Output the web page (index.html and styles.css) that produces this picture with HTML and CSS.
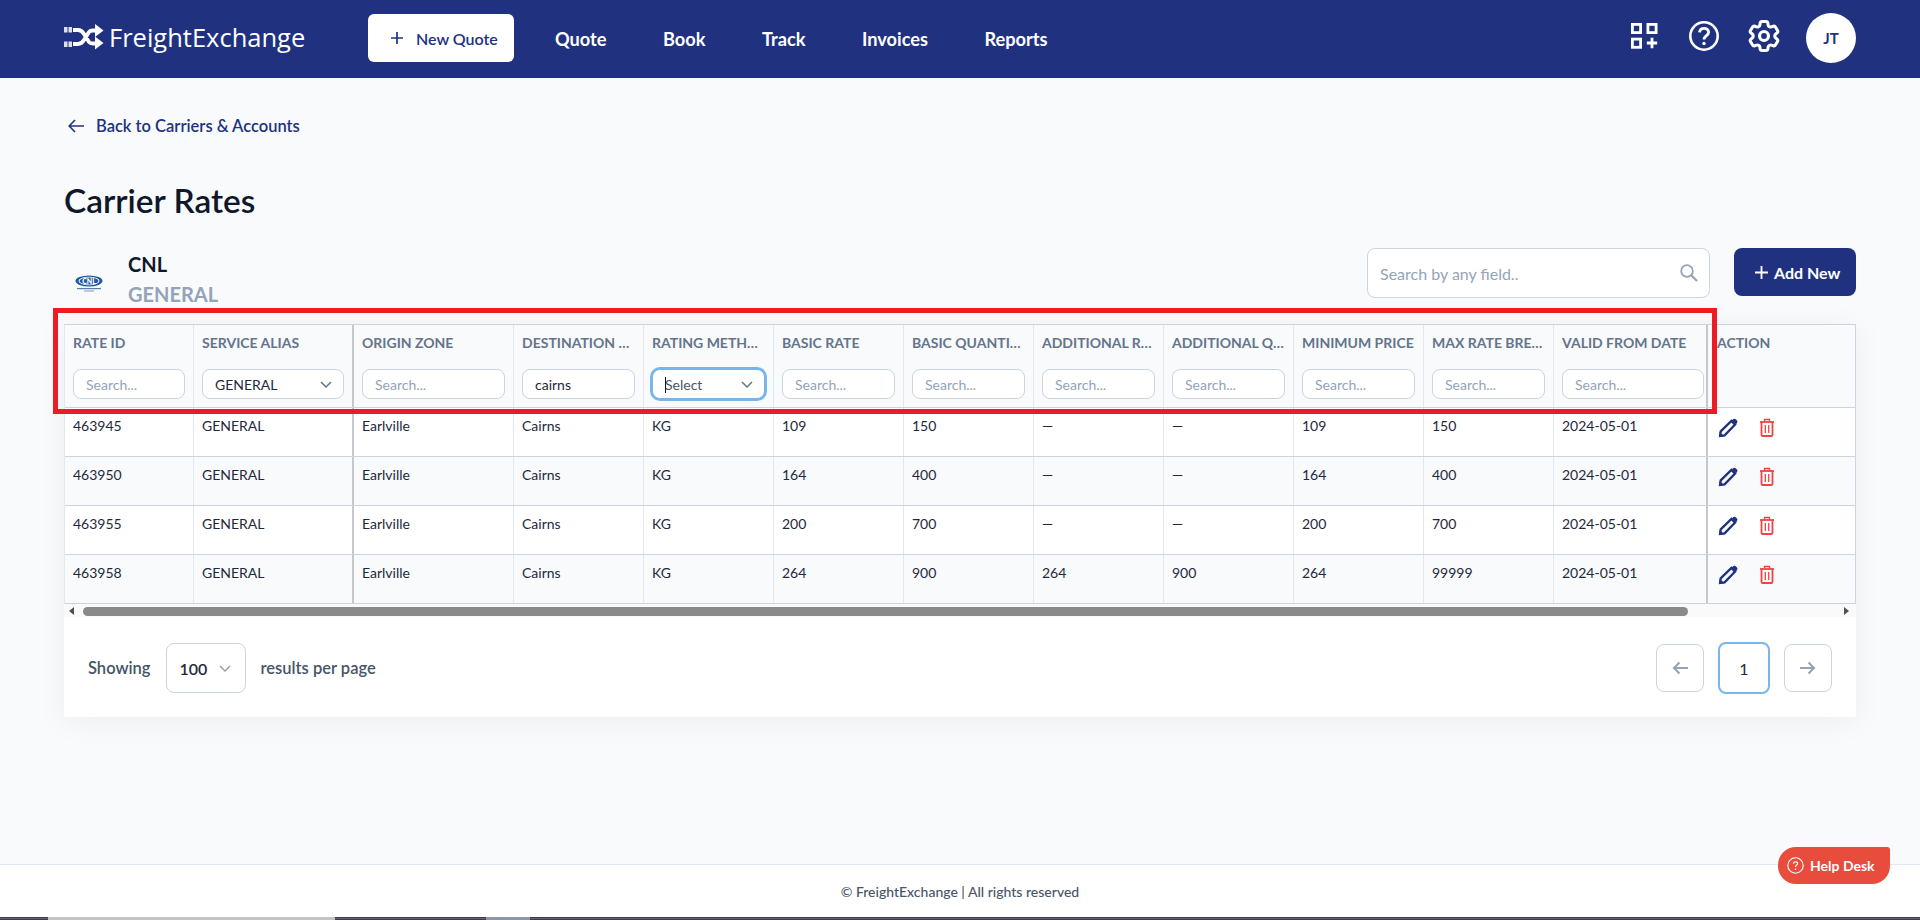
FILE: index.html
```html
<!DOCTYPE html>
<html lang="en">
<head>
<meta charset="utf-8">
<title>Carrier Rates</title>
<link rel="stylesheet" href="styles.css">
</head>
<body>
<svg class="defs" width="0" height="0">
  <defs>
    <g id="pencil"><path d="M2.100 17.900l.6-4.500L13.400 2.900l3.700 3.700L6.600 17.300z" fill="none" stroke="#20327f" stroke-width="2.300"/><path d="M14.800 1.500c1-1 2.200-1 3.100-.1l.9.900c.9.900.9 2.100-.1 3.100l-.9.900-3.900-3.900z" fill="#20327f"/><path d="M1 19l.7-5 4.300 4.300z" fill="#20327f"/></g>
    <g id="trash" fill="none" stroke="#ef4444"><path d="M1 4h14" stroke-width="1.800"/><path d="M5.500 3.500V1.500h5v2" stroke-width="1.400"/><path d="M2.500 4v12.700c0 .8.500 1.300 1.300 1.300h8.400c.8 0 1.300-.5 1.300-1.300V4" stroke-width="1.800"/><path d="M6.300 7v8M9.700 7v8" stroke-width="1.300"/></g>
  </defs>
</svg>
<header class="nav">
  <a class="logo">
    <svg class="logo-mark" width="40" height="26" viewBox="0 0 40 26"><g fill="#fff"><rect x="0" y="3" width="3.500" height="5.500" opacity=".85"/><rect x="4.500" y="3" width="3.500" height="5.500" opacity=".85"/><rect x="0" y="17.500" width="3.500" height="5.500" opacity=".85"/><rect x="4.500" y="17.500" width="3.500" height="5.500" opacity=".85"/><path d="M31 0l8.500 6.500L31 13z"/><path d="M31 12.500l8.500 6.500L31 25.500z"/></g><path d="M9 6h5c3 0 4.500 1.500 6 4l5 8c1 1.500 2 1.500 4 1.500h4M9 20h5c3 0 4.500-1.500 6-4l5-8c1-1.500 2-1.500 4-1.500h4" fill="none" stroke="#fff" stroke-width="3.800"/></svg>
    <span class="logo-text">FreightExchange</span>
  </a>
  <button class="new-quote"><svg width="14" height="14" viewBox="0 0 14 14"><path d="M7 1v12M1 7h12" stroke="#20327f" stroke-width="1.700" fill="none"/></svg><span>New Quote</span></button>
  <nav class="links"><a>Quote</a><a>Book</a><a>Track</a><a>Invoices</a><a>Reports</a></nav>
  <div class="nav-right">
    <svg class="i-apps" width="28" height="28" viewBox="0 0 28 28" fill="none" stroke="#fff" stroke-width="2.800"><rect x="2.400" y="2.400" width="8.200" height="8.200"/><rect x="17.900" y="2.400" width="8.200" height="8.200"/><rect x="2.400" y="17.100" width="8.200" height="8.200"/><path d="M22 15.800v10.500M16.800 21h10.400"/></svg>
    <svg class="i-help" width="32" height="32" viewBox="0 0 32 32" fill="none" stroke="#fff" stroke-width="2.600"><circle cx="16" cy="16" r="13.700"/><path d="M11.500 12.300c.3-2.500 2.200-4 4.600-4 2.600 0 4.500 1.600 4.500 3.900 0 3.500-4.600 3.500-4.600 7.300" stroke-width="2.800"/><circle cx="16" cy="23.500" r="1.700" fill="#fff" stroke="none"/></svg>
    <svg class="i-gear" width="32" height="32" viewBox="2 2 20 20" fill="none" stroke="#fff" stroke-width="1.900"><path d="M9.594 3.940c.09-.542.56-.94 1.110-.94h2.593c.55 0 1.020.398 1.110.94l.213 1.281c.063.374.313.686.645.87.074.04.147.083.22.127.325.196.72.257 1.075.124l1.217-.456a1.125 1.125 0 0 1 1.370.49l1.296 2.247a1.125 1.125 0 0 1-.26 1.431l-1.003.827c-.293.241-.438.613-.43.992a7.723 7.723 0 0 1 0 .255c-.008.378.137.75.43.991l1.004.827c.424.35.534.955.26 1.430l-1.298 2.247a1.125 1.125 0 0 1-1.369.491l-1.217-.456c-.355-.133-.75-.072-1.076.124a6.470 6.470 0 0 1-.22.128c-.331.183-.581.495-.644.869l-.213 1.281c-.09.543-.56.94-1.110.94h-2.594c-.55 0-1.019-.398-1.110-.94l-.213-1.281c-.062-.374-.312-.686-.644-.87a6.520 6.520 0 0 1-.22-.127c-.325-.196-.72-.257-1.076-.124l-1.217.456a1.125 1.125 0 0 1-1.369-.49l-1.297-2.247a1.125 1.125 0 0 1 .26-1.431l1.004-.827c.292-.24.437-.613.43-.991a6.932 6.932 0 0 1 0-.255c.007-.38-.138-.751-.43-.992l-1.004-.827a1.125 1.125 0 0 1-.26-1.430l1.297-2.247a1.125 1.125 0 0 1 1.370-.491l1.216.456c.356.133.751.072 1.076-.124.072-.044.146-.086.22-.128.332-.183.582-.495.644-.869l.214-1.280Z"/><circle cx="12" cy="12" r="2.800" stroke-width="2"/></svg>
    <div class="avatar">JT</div>
  </div>
</header>

<main class="main">
  <a class="back"><svg width="16" height="14" viewBox="0 0 16 14" fill="none" stroke="#20327f" stroke-width="1.600"><path d="M7 1L1.200 7 7 13M1.500 7H16"/></svg><span>Back to Carriers &amp; Accounts</span></a>
  <h1 class="title">Carrier Rates</h1>
  <div class="carrier-row">
    <div class="carrier">
      <div class="carrier-logo">
        <svg width="28" height="18" viewBox="0 0 28 18"><ellipse cx="14" cy="6" rx="13.500" ry="5.500" fill="#1f5a9e"/><ellipse cx="14" cy="6" rx="10.500" ry="4.200" fill="#fff"/><ellipse cx="14" cy="6" rx="9.500" ry="3.500" fill="#1f5a9e"/><text x="14" y="8.700" class="cnl-mark">CNL</text><rect x="2" y="13" width="24" height="1.200" fill="#5a7cab"/><rect x="9" y="15.500" width="10" height="1" fill="#7d96bb"/></svg>
      </div>
      <div class="carrier-names"><div class="carrier-name">CNL</div><div class="carrier-sub">GENERAL</div></div>
    </div>
    <div class="carrier-actions">
      <div class="search-all"><input class="search-all-input" placeholder="Search by any field.."><svg width="18" height="18" viewBox="0 0 18 18" fill="none" stroke="#94a3b8" stroke-width="1.800"><circle cx="7" cy="7" r="5.800"/><path d="M11.200 11.200L17 17" stroke-width="2.200"/></svg></div>
      <button class="add-new"><svg width="13" height="13" viewBox="0 0 13 13"><path d="M6.500 0v13M0 6.500h13" stroke="#fff" stroke-width="1.800" fill="none"/></svg><span>Add New</span></button>
    </div>
  </div>

  <section class="card">
    <div class="grid">
      <div class="row head">
        <div class="hc"><div class="hl">RATE ID</div><input class="fi" placeholder="Search..."></div>
        <div class="hc pin-l"><div class="hl">SERVICE ALIAS</div><div class="fs"><span>GENERAL</span><svg class="chev" width="12" height="7" viewBox="0 0 12 7"><path d="M1 1l5 5 5-5" fill="none" stroke="#64748b" stroke-width="1.500"/></svg></div></div>
        <div class="hc"><div class="hl">ORIGIN ZONE</div><input class="fi" placeholder="Search..."></div>
        <div class="hc"><div class="hl">DESTINATION ZONE</div><input class="fi" value="cairns"></div>
        <div class="hc"><div class="hl">RATING METHOD</div><div class="fs focus"><i class="caret"></i><span class="sel-ph">Select</span><svg class="chev" width="12" height="7" viewBox="0 0 12 7"><path d="M1 1l5 5 5-5" fill="none" stroke="#64748b" stroke-width="1.500"/></svg></div></div>
        <div class="hc"><div class="hl">BASIC RATE</div><input class="fi" placeholder="Search..."></div>
        <div class="hc"><div class="hl">BASIC QUANTITY</div><input class="fi" placeholder="Search..."></div>
        <div class="hc"><div class="hl">ADDITIONAL RATE</div><input class="fi" placeholder="Search..."></div>
        <div class="hc"><div class="hl">ADDITIONAL QUANTITY</div><input class="fi" placeholder="Search..."></div>
        <div class="hc"><div class="hl">MINIMUM PRICE</div><input class="fi" placeholder="Search..."></div>
        <div class="hc"><div class="hl">MAX RATE BREAK</div><input class="fi" placeholder="Search..."></div>
        <div class="hc pin-r"><div class="hl">VALID FROM DATE</div><input class="fi" placeholder="Search..."></div>
        <div class="hc last"><div class="hl">ACTION</div></div>
      </div>

      <div class="row">
        <div class="c">463945</div><div class="c pin-l">GENERAL</div><div class="c">Earlville</div><div class="c">Cairns</div><div class="c">KG</div><div class="c">109</div><div class="c">150</div><div class="c">—</div><div class="c">—</div><div class="c">109</div><div class="c">150</div><div class="c pin-r">2024-05-01</div>
        <div class="c last act"><svg class="pen" width="20" height="20" viewBox="0 0 20 20"><use href="#pencil"/></svg><svg class="bin" width="16" height="19" viewBox="0 0 16 19"><use href="#trash"/></svg></div>
      </div>
      <div class="row">
        <div class="c">463950</div><div class="c pin-l">GENERAL</div><div class="c">Earlville</div><div class="c">Cairns</div><div class="c">KG</div><div class="c">164</div><div class="c">400</div><div class="c">—</div><div class="c">—</div><div class="c">164</div><div class="c">400</div><div class="c pin-r">2024-05-01</div>
        <div class="c last act"><svg class="pen" width="20" height="20" viewBox="0 0 20 20"><use href="#pencil"/></svg><svg class="bin" width="16" height="19" viewBox="0 0 16 19"><use href="#trash"/></svg></div>
      </div>
      <div class="row">
        <div class="c">463955</div><div class="c pin-l">GENERAL</div><div class="c">Earlville</div><div class="c">Cairns</div><div class="c">KG</div><div class="c">200</div><div class="c">700</div><div class="c">—</div><div class="c">—</div><div class="c">200</div><div class="c">700</div><div class="c pin-r">2024-05-01</div>
        <div class="c last act"><svg class="pen" width="20" height="20" viewBox="0 0 20 20"><use href="#pencil"/></svg><svg class="bin" width="16" height="19" viewBox="0 0 16 19"><use href="#trash"/></svg></div>
      </div>
      <div class="row">
        <div class="c">463958</div><div class="c pin-l">GENERAL</div><div class="c">Earlville</div><div class="c">Cairns</div><div class="c">KG</div><div class="c">264</div><div class="c">900</div><div class="c">264</div><div class="c">900</div><div class="c">264</div><div class="c">99999</div><div class="c pin-r">2024-05-01</div>
        <div class="c last act"><svg class="pen" width="20" height="20" viewBox="0 0 20 20"><use href="#pencil"/></svg><svg class="bin" width="16" height="19" viewBox="0 0 16 19"><use href="#trash"/></svg></div>
      </div>
    </div>

    <div class="hscroll">
      <svg width="6" height="8" viewBox="0 0 6 8"><path d="M5 0v8L0 4z" fill="#505050"/></svg>
      <div class="hscroll-track"><div class="hscroll-thumb"></div></div>
      <svg width="6" height="8" viewBox="0 0 6 8"><path d="M1 0v8l5-4z" fill="#505050"/></svg>
    </div>

    <div class="pager">
      <div class="pager-left">
        <span>Showing</span>
        <div class="per-page"><span>100</span><svg width="12" height="7" viewBox="0 0 12 7"><path d="M1 1l5 5 5-5" fill="none" stroke="#94a3b8" stroke-width="1.500"/></svg></div>
        <span>results per page</span>
      </div>
      <div class="pager-right">
        <button class="pg"><svg width="16" height="14" viewBox="0 0 16 14" fill="none" stroke="#94a3b8" stroke-width="2"><path d="M7.500 1.500L2 7l5.500 5.500M2 7h14"/></svg></button>
        <button class="pg current">1</button>
        <button class="pg"><svg width="16" height="14" viewBox="0 0 16 14" fill="none" stroke="#94a3b8" stroke-width="2"><path d="M8.500 1.500L14 7l-5.500 5.500M14 7H0"/></svg></button>
      </div>
    </div>
  </section>
</main>

<footer class="footer">© FreightExchange | All rights reserved</footer>
<div class="strip"><div class="strip-a"></div><div class="strip-b"></div></div>

<div class="redbox"></div>
<button class="help"><svg width="17" height="17" viewBox="0 0 17 17" fill="none" stroke="#fff" stroke-width="1.100"><circle cx="8.500" cy="8.500" r="7.700"/><path d="M6.400 6.700c.1-1.200 1-1.900 2.100-1.900 1.200 0 2.100.8 2.100 1.800 0 1.500-2.100 1.600-2.100 3.300" stroke-width="1.200"/><circle cx="8.500" cy="12.200" r=".8" fill="#fff" stroke="none"/></svg><span>Help Desk</span></button>
</body>
</html>
```

FILE: styles.css
```css
* { box-sizing: border-box; }
html { overflow: hidden; }
html, body { margin: 0; height: 100%; }
body {
  height: 920px;
  overflow: hidden;
  display: flex;
  flex-direction: column;
  position: relative;
  background: #f8fafc;
  color: #1e293b;
  font-family: "Lato", "Liberation Sans", sans-serif;
  font-size: 14px;
}
button { font-family: inherit; cursor: pointer; }
input { font-family: inherit; }

/* Top bar */
.nav {
  flex: none;
  height: 78px;
  background: #20327f;
  display: flex;
  align-items: center;
  padding: 0 64px;
}
.logo { display: flex; align-items: center; gap: 5px; width: 304px; flex: none; color: #fff; margin-top: -4px; }
.logo-mark { flex: none; }
.logo-text { font-family: "Open Sans", sans-serif; font-size: 25.5px; font-weight: 400; line-height: 30px; }
.new-quote {
  width: 146px; height: 48px; flex: none;
  margin-top: -2px;
  background: #fff; color: #20327f; border: 0; border-radius: 6px;
  display: flex; align-items: center; gap: 12px; padding: 0 0 0 22px;
  font-size: 16px; font-weight: 600;
}
.links { display: flex; align-items: center; gap: 56.5px; margin-left: 41px; margin-top: -1px; }
.links a { color: #fff; font-size: 18.2px; font-weight: 700; }
.nav-right { margin-left: auto; display: flex; align-items: center; }
.i-apps, .i-help, .i-gear { margin-top: -6px; }
.i-help { margin-left: 30px; }
.i-gear { margin-left: 28px; }
.avatar {
  margin-left: 26px;
  margin-top: -2px;
  width: 50px; height: 50px; border-radius: 50%;
  background: #fff; color: #20327f;
  display: flex; align-items: center; justify-content: center;
  font-size: 15px; font-weight: 700;
}

/* Page */
.main { flex: 1; padding: 38px 64px 0; min-height: 0; }
.back { display: flex; align-items: center; gap: 12px; padding-left: 4px; height: 20px; color: #20327f; font-size: 16.5px; font-weight: 600; }
.title { margin: 44px 0 28px; font-size: 33.4px; line-height: 40px; font-weight: 600; color: #0f172a; }

.carrier-row { height: 76px; display: flex; justify-content: space-between; align-items: flex-start; }
.carrier { display: flex; align-items: flex-start; }
.carrier-logo { width: 64px; padding: 27px 0 0 11px; }
.carrier-logo svg { display: block; }
.cnl-mark { font-family: "Lato", sans-serif; font-size: 7px; font-weight: 900; fill: #fff; text-anchor: middle; }
.carrier-names { padding-top: 2px; font-size: 20px; line-height: 28px; font-weight: 700; }
.carrier-name { color: #0f172a; }
.carrier-sub { margin-top: 2px; color: #94a3b8; }
.carrier-actions { display: flex; gap: 24px; }
.search-all {
  width: 343px; height: 50px;
  background: #fff; border: 1px solid #cbd5e1; border-radius: 8px;
  display: flex; align-items: center; padding: 0 11px 0 12px;
}
.search-all-input { flex: 1; min-width: 0; border: 0; outline: 0; background: transparent; font-size: 16px; padding: 0; color: #1e293b; }
.search-all-input::placeholder { color: #94a3b8; opacity: 1; }
.add-new {
  width: 122px; height: 48px;
  background: #20327f; color: #fff; border: 0; border-radius: 8px;
  display: flex; align-items: center; gap: 6px; padding: 0 0 0 21px;
  font-size: 16px; font-weight: 700;
}

/* Grid */
.card { background: #fff; box-shadow: 0 4px 30px rgba(15, 23, 42, .05); }
.grid { border: 1px solid #cbd5e1; border-left-color: #e2e8f0; border-bottom: 0; }
.row {
  display: grid;
  grid-template-columns: 129px 160px 160px repeat(8, 130px) 154px 147px;
  border-bottom: 1px solid #cbd5e1;
  background: #fff;
}
.row:nth-child(odd) { background: #f8fafc; }
.head { background: linear-gradient(#f8fafc 85%, #f3f5f8); }
.hc, .c { border-right: 1px solid #e2e8f0; min-width: 0; }
.hc { padding: 8px 8px; }
.c { height: 48px; padding: 8px; line-height: 20px; font-size: 14px; color: #1e293b; }
.pin-l, .pin-r { border-right: 2px solid #c5c8cc; }
.hc.pin-r { padding-right: 2px; }
.last { border-right: 0; padding-left: 9px; }
.hl {
  height: 20px; line-height: 20px; margin-bottom: 16px;
  font-size: 14px; font-weight: 700; color: #64748b;
  white-space: nowrap; overflow: hidden; text-overflow: ellipsis;
}
.fi, .fs {
  display: flex; align-items: center;
  width: 100%; height: 30px;
  background: #fff; border: 1px solid #cbd5e1; border-radius: 8px;
  padding: 0 12px; font-size: 14px; color: #1e293b; outline: 0;
}
.fi::placeholder { color: #94a3b8; opacity: 1; }
.fs { justify-content: space-between; position: relative; padding-right: 11px; }
.focus { border-color: #78b6ea; box-shadow: 0 0 0 2px #78b6ea; }
.sel-ph { color: #475569; }
.caret { position: absolute; left: 12px; top: 7px; width: 1px; height: 16px; background: #0f172a; }
.act { display: flex; align-items: flex-start; gap: 21px; padding-top: 10px; padding-left: 10px; }
.act svg { flex: none; }
.defs { position: absolute; left: 0; top: 0; }

/* Scrollbar */
.hscroll { height: 13px; display: flex; align-items: flex-start; gap: 8px; padding: 3px 7px 1px 5px; background: #fafafa; }
.hscroll svg { flex: none; }
.hscroll-track { flex: 1; }
.hscroll-thumb { width: 1605px; height: 9px; border-radius: 5px; background: #8a8a8a; }

/* Pager */
.pager { display: flex; justify-content: space-between; align-items: center; padding: 26px 24px 24px; height: 100px; }
.pager-left { display: flex; align-items: center; gap: 15px; font-size: 16.5px; font-weight: 600; color: #475569; }
.per-page {
  width: 80px; height: 50px; border: 1px solid #cbd5e1; border-radius: 8px;
  display: flex; align-items: center; justify-content: space-between; padding: 0 14px 0 13px;
  color: #1e293b; font-size: 16px; font-weight: 600;
}
.pager-right { display: flex; align-items: center; gap: 14px; }
.pg {
  width: 48px; height: 48px; padding: 0;
  background: #fff; border: 1px solid #cbd5e1; border-radius: 8px;
  display: flex; align-items: center; justify-content: center;
}
.current { width: 52px; height: 52px; border: 2px solid #78b6ea; font-size: 16px; color: #1e293b; }

/* Footer */
.footer {
  flex: none; height: 53px;
  background: #fff; border-top: 1px solid #e2e8f0;
  display: flex; align-items: center; justify-content: center;
  font-size: 14px; font-weight: 500; color: #475569;
}
.strip {
  flex: none; height: 3px;
  display: flex;
  padding-left: 48px;
  background: linear-gradient(#3f3a47 33%, #6b6270 33% 66%, #3f3a47 66%);
}
.strip-a { width: 287px; background: #c4c4c4; }
.strip-b { width: 44px; margin-left: 151px; background: #8f95a8; }

/* Overlays */
.redbox { position: absolute; left: 53px; top: 308px; width: 1664px; height: 106px; border: 5px solid #ed1c24; pointer-events: none; }
.help {
  position: absolute; left: 1778px; top: 847px;
  width: 112px; height: 37px;
  background: #e74c3c; color: #fff; border: 0;
  border-radius: 18px 3px 18px 18px;
  display: flex; align-items: center; gap: 6px; padding: 0 0 0 9px;
  font-size: 14px; font-weight: 700;
}
```
